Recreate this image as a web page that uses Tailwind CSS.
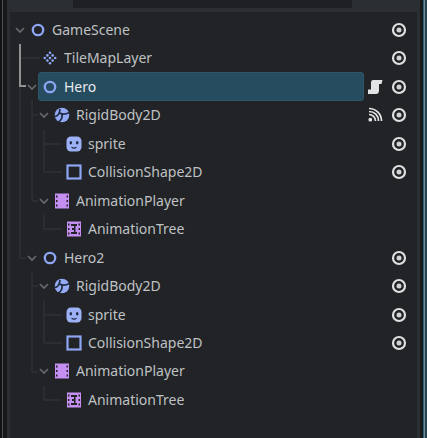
<!DOCTYPE html>
<html lang="en">
<head>
    <meta charset="UTF-8">
    <title>Scene Tree</title>
    <script src="https://cdn.jsdelivr.net/npm/@tailwindcss/browser@4"></script>
</head>
<body class="bg-[#2b2e32] font-['Noto_Sans',sans-serif] text-[14px] text-[#bfc1c4] overflow-hidden">
    <!-- icon set -->
    <svg class="hidden">
        <symbol id="eye" viewBox="0 0 16 16"><circle cx="8" cy="8" r="6" fill="none" stroke="#dfe0e1" stroke-width="2.200"/><circle cx="8" cy="8" r="2.500" fill="#d2d3d5"/></symbol>
        <symbol id="node" viewBox="0 0 16 16"><circle cx="8" cy="8" r="5.200" fill="none" stroke="#8da5f3" stroke-width="2.300"/></symbol>
        <symbol id="tilemap" viewBox="0 0 16 16"><g fill="#8da5f3"><circle cx="8" cy="2.800" r="1.300"/><circle cx="5.400" cy="5.400" r="1.300"/><circle cx="10.600" cy="5.400" r="1.300"/><circle cx="2.800" cy="8" r="1.300"/><circle cx="8" cy="8" r="1.300"/><circle cx="13.200" cy="8" r="1.300"/><circle cx="5.400" cy="10.600" r="1.300"/><circle cx="10.600" cy="10.600" r="1.300"/><circle cx="8" cy="13.200" r="1.300"/></g></symbol>
        <symbol id="body" viewBox="0 0 16 16"><circle cx="8" cy="8" r="7.300" fill="#93aaf4"/><path d="M0.500 9.500C3.500 9.500 5.500 7.500 6 2M6 6C8.500 8 11.500 7.500 15.500 5.500M8 7.500C8.500 10.500 7.500 13 4.500 15" fill="none" stroke="#1f2a44" stroke-width="1.700"/></symbol>
        <symbol id="sprite" viewBox="0 0 16 16"><rect x="0.500" y="0.500" width="15" height="15" rx="4.500" fill="#9db2f6"/><ellipse cx="4.800" cy="6.800" rx="1.300" ry="1.800" fill="#232c4a"/><ellipse cx="11.200" cy="6.800" rx="1.300" ry="1.800" fill="#232c4a"/><path d="M5.500 11.200Q8 13 10.500 11.200" fill="none" stroke="#232c4a" stroke-width="1.200"/></symbol>
        <symbol id="shape" viewBox="0 0 16 16"><rect x="1.500" y="1.500" width="13" height="13" fill="none" stroke="#8da5f3" stroke-width="2.200"/></symbol>
        <symbol id="player" viewBox="0 0 16 16"><path fill="#c58ff2" fill-rule="evenodd" d="M1 0.500H15V15.500H1ZM2 2.500V4.500H3.500V2.500ZM2 7V9H3.500V7ZM2 11.500V13.500H3.500V11.500ZM12.500 2.500V4.500H14V2.500ZM12.500 7V9H14V7ZM12.500 11.500V13.500H14V11.500Z"/></symbol>
        <symbol id="tree" viewBox="0 0 16 16"><path fill="#c58ff2" fill-rule="evenodd" d="M1 0.500H15V15.500H1ZM2 2.500V4.500H3.500V2.500ZM2 7V9H3.500V7ZM2 11.500V13.500H3.500V11.500ZM12.500 2.500V4.500H14V2.500ZM12.500 7V9H14V7ZM12.500 11.500V13.500H14V11.500ZM5 3V5H8V7H6V9H8V11H5V13H11V11H9.500V5H11V3Z"/></symbol>
        <symbol id="script" viewBox="0 0 16 16"><path fill="#e2e3e4" d="M6 1H15.500L14.500 5H12V11.500C12 13.500 11 15 9 15H1V10.500H4V4C4 2.300 4.800 1 6 1Z"/></symbol>
        <symbol id="signal" viewBox="0 0 16 16"><g fill="none" stroke="#e2e3e4" stroke-width="1.700"><path d="M2 7.500C5.500 7.500 8.500 10.500 8.500 14"/><path d="M2 4.500C7.500 4.500 11.500 8.500 11.500 14"/><path d="M2 1.500C9 1.500 14.500 7 14.500 14"/></g><circle cx="3.300" cy="12.700" r="1.900" fill="#e2e3e4"/></symbol>
        <symbol id="chev" viewBox="0 0 12 12"><path d="M2 4L6 8L10 4" fill="none" stroke="#66696d" stroke-width="1.700"/></symbol>
    </svg>

    <div class="flex h-[438px] w-[427px]">
        <!-- left dock edge -->
        <div class="flex w-[10px] shrink-0">
            <div class="w-[2px] bg-[#111214]"></div>
            <div class="w-[1px] bg-[#4c4f53]"></div>
            <div class="w-[4px] bg-[#17181a]"></div>
        </div>

        <div class="flex flex-1 flex-col">
            <!-- search bar, cut off by the screenshot -->
            <div class="h-[12px] shrink-0">
                <div class="ml-[63px] h-[8px] w-[279px] bg-[#1e2023]"></div>
            </div>

            <!-- tree panel -->
            <div class="relative flex-1 bg-[#212326] pt-[3.800px] pr-[10px]">
                <!-- guide lines -->
                <svg class="absolute left-[-10px] top-[-12px]" width="427" height="438" fill="none" stroke="#2f3236" stroke-width="1.500">
                    <path d="M20 86V258H26M20 58H40M32 100V201M32 115H38M32 201H38M44 130V172M44 144H62M44 172H62M44 215V229H62M32 272V372M32 286H38M32 372H38M44 300V343M44 315H62M44 343H62M44 386V400H62"/>
                    <path d="M20 44V86H26" stroke="#8f9193" stroke-width="2"/>
                </svg>

                <div class="relative flex h-[28.460px] items-center pl-[4px]">
                    <svg class="h-3 w-3"><use href="#chev"/></svg>
                    <svg class="ml-1 h-4 w-4"><use href="#node"/></svg>
                    <span class="ml-1.5 -mt-[1px]">GameScene</span>
                    <svg class="ml-auto h-4 w-4"><use href="#eye"/></svg>
                </div>
                <div class="relative flex h-[28.460px] items-center pl-[32px]">
                    <svg class="h-4 w-4"><use href="#tilemap"/></svg>
                    <span class="ml-1.5 -mt-[1px]">TileMapLayer</span>
                    <svg class="ml-auto h-4 w-4"><use href="#eye"/></svg>
                </div>
                <div class="relative flex h-[28.460px] items-center pl-[16px]">
                    <svg class="h-3 w-3"><use href="#chev"/></svg>
                    <div class="flex h-[29px] w-[326px] items-center rounded-[3px] border border-[#2d5669] bg-[#264c5f] pl-[3px] text-[#e8eaec]">
                        <svg class="h-4 w-4"><use href="#node"/></svg>
                        <span class="ml-1.5 -mt-[1px]">Hero</span>
                    </div>
                    <svg class="ml-[3px] h-4 w-4"><use href="#script"/></svg>
                    <svg class="ml-auto h-4 w-4"><use href="#eye"/></svg>
                </div>
                <div class="relative flex h-[28.460px] items-center pl-[28px]">
                    <svg class="h-3 w-3"><use href="#chev"/></svg>
                    <svg class="ml-1 h-4 w-4"><use href="#body"/></svg>
                    <span class="ml-1.5 -mt-[1px]">RigidBody2D</span>
                    <svg class="ml-auto h-4 w-4"><use href="#signal"/></svg>
                    <svg class="ml-2 h-4 w-4"><use href="#eye"/></svg>
                </div>
                <div class="relative flex h-[28.460px] items-center pl-[56px]">
                    <svg class="h-4 w-4"><use href="#sprite"/></svg>
                    <span class="ml-1.5 -mt-[1px]">sprite</span>
                    <svg class="ml-auto h-4 w-4"><use href="#eye"/></svg>
                </div>
                <div class="relative flex h-[28.460px] items-center pl-[56px]">
                    <svg class="h-4 w-4"><use href="#shape"/></svg>
                    <span class="ml-1.5 -mt-[1px]">CollisionShape2D</span>
                    <svg class="ml-auto h-4 w-4"><use href="#eye"/></svg>
                </div>
                <div class="relative flex h-[28.460px] items-center pl-[28px]">
                    <svg class="h-3 w-3"><use href="#chev"/></svg>
                    <svg class="ml-1 h-4 w-4"><use href="#player"/></svg>
                    <span class="ml-1.5 -mt-[1px]">AnimationPlayer</span>
                </div>
                <div class="relative flex h-[28.460px] items-center pl-[56px]">
                    <svg class="h-4 w-4"><use href="#tree"/></svg>
                    <span class="ml-1.5 -mt-[1px]">AnimationTree</span>
                </div>
                <div class="relative flex h-[28.460px] items-center pl-[16px]">
                    <svg class="h-3 w-3"><use href="#chev"/></svg>
                    <svg class="ml-1 h-4 w-4"><use href="#node"/></svg>
                    <span class="ml-1.5 -mt-[1px]">Hero2</span>
                    <svg class="ml-auto h-4 w-4"><use href="#eye"/></svg>
                </div>
                <div class="relative flex h-[28.460px] items-center pl-[28px]">
                    <svg class="h-3 w-3"><use href="#chev"/></svg>
                    <svg class="ml-1 h-4 w-4"><use href="#body"/></svg>
                    <span class="ml-1.5 -mt-[1px]">RigidBody2D</span>
                    <svg class="ml-auto h-4 w-4"><use href="#eye"/></svg>
                </div>
                <div class="relative flex h-[28.460px] items-center pl-[56px]">
                    <svg class="h-4 w-4"><use href="#sprite"/></svg>
                    <span class="ml-1.5 -mt-[1px]">sprite</span>
                    <svg class="ml-auto h-4 w-4"><use href="#eye"/></svg>
                </div>
                <div class="relative flex h-[28.460px] items-center pl-[56px]">
                    <svg class="h-4 w-4"><use href="#shape"/></svg>
                    <span class="ml-1.5 -mt-[1px]">CollisionShape2D</span>
                    <svg class="ml-auto h-4 w-4"><use href="#eye"/></svg>
                </div>
                <div class="relative flex h-[28.460px] items-center pl-[28px]">
                    <svg class="h-3 w-3"><use href="#chev"/></svg>
                    <svg class="ml-1 h-4 w-4"><use href="#player"/></svg>
                    <span class="ml-1.5 -mt-[1px]">AnimationPlayer</span>
                </div>
                <div class="relative flex h-[28.460px] items-center pl-[56px]">
                    <svg class="h-4 w-4"><use href="#tree"/></svg>
                    <span class="ml-1.5 -mt-[1px]">AnimationTree</span>
                </div>
            </div>
        </div>

        <!-- right dock edge -->
        <div class="flex w-[10px] shrink-0">
            <div class="w-[3px]"></div>
            <div class="w-[3px] bg-[#191a1c]"></div>
            <div class="w-[1px] bg-[#2f6272]"></div>
            <div class="w-[1px] bg-[#6f8f9a]"></div>
            <div class="w-[2px] bg-[#26434f]"></div>
        </div>
    </div>
</body>
</html>
